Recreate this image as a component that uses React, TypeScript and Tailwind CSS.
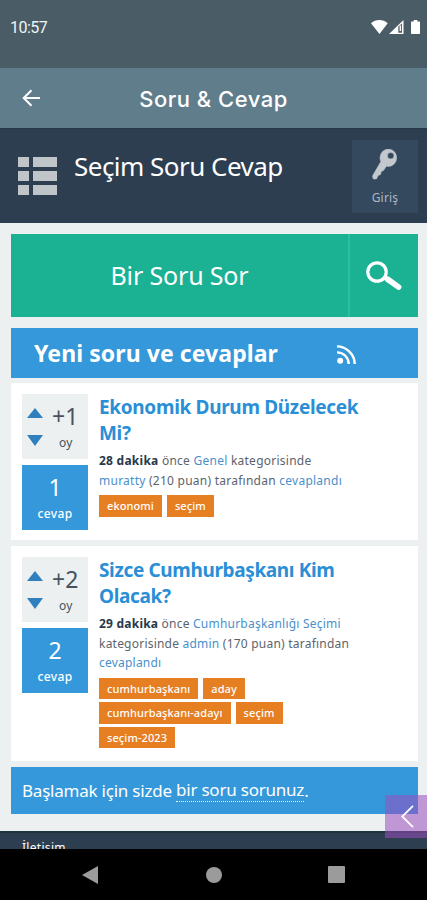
import type { ReactNode } from "react";

function StatusBar() {
  return (
    <div className="flex h-[68px] shrink-0 items-start justify-between bg-[#4a5d67] pr-[7px] pl-[10px]">
      <span className="mt-[18px] font-['Roboto',sans-serif] text-[16px] leading-[20px] tracking-[-0.5px] text-[#eef3f5]">
        10:57
      </span>
      <div className="mt-[20px] flex items-start text-white">
        <svg width="17" height="14" viewBox="0 0 17 14" fill="currentColor">
          <path d="M0 3.2C2.4 1 5.3 0 8.3 0s6 1 8.4 3.2L8.5 14z" />
        </svg>
        <svg className="ml-px" width="15" height="14" viewBox="0 0 15 14" fill="currentColor">
          <path d="M0 14 14.500 0V14z" />
          <path d="M9.300 6.500V12.800H13V3.500z" fill="#4a5d67" />
          <path d="M10.600 5.500h1.500v5.500h-1.500z" />
        </svg>
        <svg className="ml-[7px]" width="9" height="14" viewBox="0 0 9 14" fill="currentColor">
          <path d="M2.700 0h3.600v1.400H8.300a.7.7 0 0 1 .7.7V13.300a.7.7 0 0 1-.7.7H.7a.7.7 0 0 1-.7-.7V2.100a.7.7 0 0 1 .7-.7h2z" />
        </svg>
      </div>
    </div>
  );
}

function AppBar() {
  return (
    <div className="grid h-[61px] shrink-0 grid-cols-[62px_1fr_62px] items-center border-b border-[#263846] bg-[#607d8c]">
      <svg className="ml-[22px]" width="19" height="18" viewBox="0 0 19 18" fill="none" stroke="#fff" strokeWidth="2">
        <path d="M18 9H2M9.500 1.200 1.700 9l7.800 7.800" />
      </svg>
      <h1 className="pt-px text-center font-['Inter',sans-serif] text-[22px] leading-[28px] font-medium tracking-[0.5px] text-white">
        Soru &amp; Cevap
      </h1>
    </div>
  );
}

function SiteHeader() {
  return (
    <div className="flex h-[94px] shrink-0 items-start bg-[#2c3e50] pr-[9px] pl-[18px]">
      <div className="mt-[28px] grid grid-cols-[11px_24px] gap-x-[4px] gap-y-[4px]">
        {[0, 1, 2, 3, 4, 5].map((i) => (
          <span key={i} className="h-[10px] bg-[#c0c5ca]" />
        ))}
      </div>
      <div className="mt-[19px] ml-[17px] flex-1 text-[26px] leading-[36px] tracking-[-0.52px] whitespace-nowrap text-white">
        Seçim Soru Cevap
      </div>
      <div className="mt-[11px] flex h-[73px] w-[66px] flex-col items-center bg-[#34495e]">
        <svg className="mt-[9px]" width="26" height="31" viewBox="0 0 26 31">
          <path
            d="M16.800 0A8.800 8.800 0 0 0 8 8.800c0 1.400.3 2.700.9 3.800L.8 26.500c-.3.600-.2 1.200.1 2.400.2.700.6 1.200 1.300 1.200l2.200-.2 1.800-3.500 2.300-1 .8-3 2.200-1 3-4.300c.7.300 1.500.4 2.300.4A8.800 8.800 0 0 0 16.800 0zm1.900 3.400a3.300 3.300 0 1 1 0 6.600 3.300 3.300 0 0 1 0-6.600z"
            fill="#c3c8ce"
            stroke="#c3c8ce"
            strokeWidth=".6"
            fillRule="evenodd"
          />
        </svg>
        <span className="mt-[9px] text-[12px] leading-[18px] tracking-[0.2px] text-[#aeb7c0]">Giriş</span>
      </div>
    </div>
  );
}

function AskBar() {
  return (
    <div className="flex h-[83px] bg-[#1bb193] text-white">
      <div className="flex w-[339px] items-center justify-center border-r-2 border-[#2dbd9f] pb-[2px] text-[25px] leading-[36px] tracking-[-0.15px]">
        Bir Soru Sor
      </div>
      <div className="flex flex-1 items-center justify-center">
        <svg width="36" height="30" viewBox="0 0 36 30" fill="none" stroke="#fff">
          <circle cx="11" cy="11" r="9.200" strokeWidth="3.200" />
          <path d="M18 15.500 22 18.500" strokeWidth="4" />
          <path d="M21.500 18.200 32.500 26" strokeWidth="5.800" strokeLinecap="round" />
        </svg>
      </div>
    </div>
  );
}

function SectionTitle() {
  return (
    <div className="mt-[11px] flex h-[50px] items-center bg-[#3498db] pl-[23px] text-white">
      <h2 className="w-[303px] text-[23px] leading-[32px] font-bold tracking-[0.08px] whitespace-nowrap">
        Yeni soru ve cevaplar
      </h2>
      <svg className="mt-[3px]" width="19" height="19" viewBox="0 0 19 19" fill="none" stroke="currentColor" strokeWidth="2.400">
        <circle cx="3.200" cy="15.800" r="3" fill="currentColor" stroke="none" />
        <path d="M0 1.400C9.500 1.400 17.700 9.500 17.700 19M0 7.400C6.500 7.400 11.700 12.500 11.700 19" />
      </svg>
    </div>
  );
}

function Counters({ votes, answers }: { votes: string; answers: string }) {
  return (
    <div className="w-[66px] shrink-0">
      <div className="flex h-[65px] bg-[#ecf0f1]">
        <div className="mt-[14px] ml-[5px] flex w-[16px] flex-col gap-[17px]">
          <svg width="16" height="10" viewBox="0 0 16 10" fill="#2f80bd">
            <path d="M8 0 16 10H0z" />
          </svg>
          <svg width="16" height="11" viewBox="0 0 16 11" fill="#2f80bd">
            <path d="M0 0H16L8 11z" />
          </svg>
        </div>
        <div className="flex flex-1 flex-col pl-[9px] text-[#46535f]">
          <span className="mt-[6px] text-[23px] leading-[32px]">{votes}</span>
          <span className="mt-[2px] pl-[7px] text-[12px] leading-[18px] tracking-[0.3px]">oy</span>
        </div>
      </div>
      <div className="mt-[6px] flex h-[65px] flex-col items-center bg-[#3498db] text-white">
        <span className="mt-[7px] text-[23px] leading-[30px]">{answers}</span>
        <span className="mt-[3px] text-[12px] leading-[18px] font-medium tracking-[0.35px]">cevap</span>
      </div>
    </div>
  );
}

function Link({ children }: { children: ReactNode }) {
  return <a className="text-[#4a8fca]">{children}</a>;
}

function Tags({ rows }: { rows: string[][] }) {
  return (
    <div className="mt-[5px] flex flex-col gap-[3px]">
      {rows.map((row) => (
        <div key={row[0]} className="flex gap-[5px]">
          {row.map((tag) => (
            <span
              key={tag}
              className="h-[21.500px] bg-[#e67e22] px-[8px] text-[11px] leading-[21px] font-medium tracking-[0.1px] whitespace-nowrap text-white"
            >
              {tag}
            </span>
          ))}
        </div>
      ))}
    </div>
  );
}

export default function App() {
  return (
    <div className="flex h-[900px] w-[427px] flex-col overflow-hidden bg-[#ecf0f1] font-['Noto_Sans',sans-serif]">
      <StatusBar />
      <AppBar />
      <SiteHeader />
      <main className="flex h-[608px] shrink-0 flex-col pt-[11px] pr-[9px] pl-[11px]">
        <AskBar />
        <SectionTitle />

        <article className="mt-[5px] flex h-[157px] gap-[11px] bg-white pt-[11px] pl-[11px]">
          <Counters votes="+1" answers="1" />
          <div className="whitespace-nowrap">
            <h3 className="text-[19px] leading-[26px] font-bold tracking-[-0.32px] text-[#2a8fd6]">
              Ekonomik Durum Düzelecek
              <br />
              Mi?
            </h3>
            <p className="mt-[5px] text-[12px] leading-[19.500px] tracking-[0.25px] text-[#5b646d]">
              <b className="text-[#28394a]">28 dakika</b> önce <Link>Genel</Link> kategorisinde
              <br />
              <Link>muratty</Link> (210 puan) tarafından <Link>cevaplandı</Link>
            </p>
            <Tags rows={[["ekonomi", "seçim"]]} />
          </div>
        </article>

        <article className="mt-[6px] flex h-[215px] gap-[11px] bg-white pt-[11px] pl-[11px]">
          <Counters votes="+2" answers="2" />
          <div className="whitespace-nowrap">
            <h3 className="text-[19px] leading-[26px] font-bold tracking-[-0.36px] text-[#2a8fd6]">
              Sizce Cumhurbaşkanı Kim
              <br />
              Olacak?
            </h3>
            <p className="mt-[5px] text-[12px] leading-[19.500px] tracking-[0.22px] text-[#5b646d]">
              <b className="text-[#28394a]">29 dakika</b> önce <Link>Cumhurbaşkanlığı Seçimi</Link>
              <br />
              kategorisinde <Link>admin</Link> (170 puan) tarafından
              <br />
              <Link>cevaplandı</Link>
            </p>
            <Tags rows={[["cumhurbaşkanı", "aday"], ["cumhurbaşkanı-adayı", "seçim"], ["seçim-2023"]]} />
          </div>
        </article>

        <div className="mt-[6px] flex h-[47px] items-center bg-[#3498db] pl-[11px] text-[17px] leading-[22px] tracking-[-0.22px] whitespace-pre text-white">
          Başlamak için sizde <a className="border-b border-dotted border-white">bir soru sorunuz</a>.
        </div>
      </main>
      <footer className="h-[18px] shrink-0 overflow-hidden border-t-2 border-[#1e343d] bg-[#2c3e50] pl-[22px]">
        <span className="mt-[6px] block text-[12px] leading-[18px] tracking-[0.3px] text-white">İletişim</span>
      </footer>
      <nav className="flex h-[51px] shrink-0 items-center bg-black pl-[82px]">
        <svg width="16" height="18" viewBox="0 0 16 18" fill="#9b9b9b">
          <path d="M16 0V18L0 9z" />
        </svg>
        <span className="ml-[108px] size-[16px] rounded-full bg-[#9b9b9b]" />
        <span className="ml-[106px] size-[17px] rounded-[1px] bg-[#9b9b9b]" />
      </nav>
      <div className="absolute top-[795px] left-[385px] flex h-[43px] w-[42px] items-center bg-[#9b4fbd]/55 pl-[16px]">
        <svg width="13" height="23" viewBox="0 0 13 23" fill="none" stroke="#fff" strokeWidth="1.800">
          <path d="M12 .8 1.200 11.500 12 22.200" />
        </svg>
      </div>
    </div>
  );
}
